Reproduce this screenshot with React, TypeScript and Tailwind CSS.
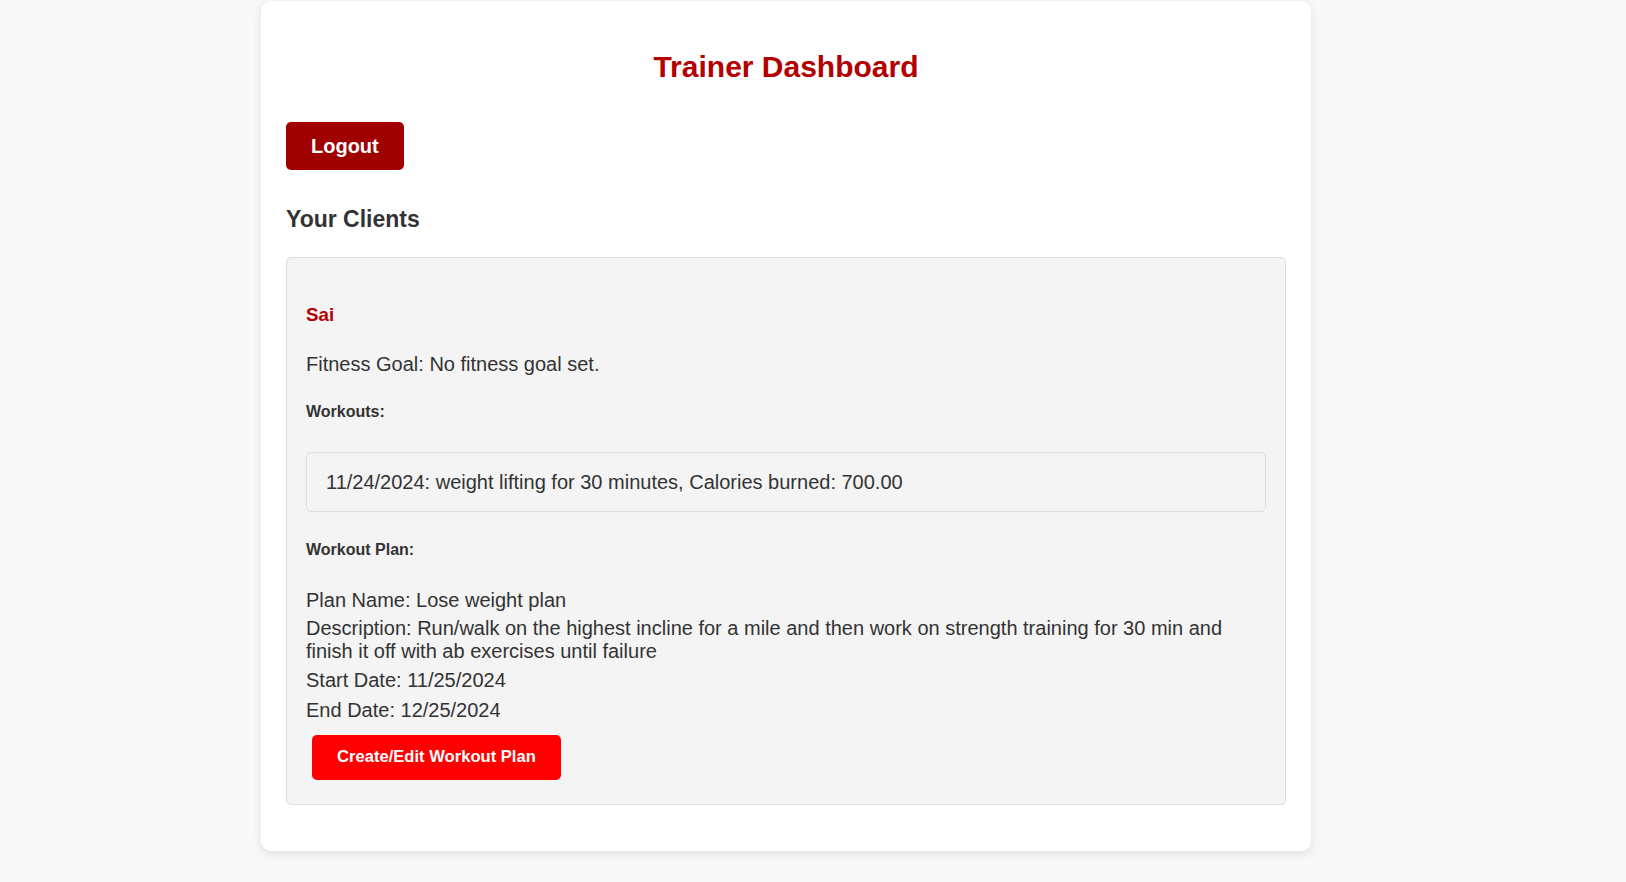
// Trainer dashboard: one white card holding the client list.

const font = { fontFamily: '"Liberation Sans", Arial, sans-serif' }

const client = {
  name: 'Sai',
  goal: 'No fitness goal set.',
  workouts: ['11/24/2024: weight lifting for 30 minutes, Calories burned: 700.00'],
  plan: {
    name: 'Lose weight plan',
    description:
      'Run/walk on the highest incline for a mile and then work on strength training for 30 min and finish it off with ab exercises until failure',
    start: '11/25/2024',
    end: '12/25/2024',
  },
}

export default function App() {
  return (
    <div style={font} className="min-h-screen bg-[#f8f8f8] pt-px text-[#333]">
      <div className="ml-[261px] w-[1050px] rounded-[10px] bg-white px-[25px] pt-[49px] pb-[46px] shadow-[0_3px_10px_rgba(0,0,0,0.1)]">
        <h1 className="text-center text-[30px] leading-[34px] font-bold text-[#b30000]">
          Trainer Dashboard
        </h1>

        <button className="mt-[38px] h-[48px] rounded-[5px] bg-[#a00000] px-[25px] text-[20px] font-bold text-white">
          Logout
        </button>

        <h2 className="mt-[36px] text-[23px] leading-[26px] font-bold text-[#333]">Your Clients</h2>

        <div className="mt-[25px] rounded-[5px] border border-[#ddd] bg-[#f4f4f4] px-[19px] pb-[24px] pt-[21px]">
          <h3 className="mt-[25px] text-[18.72px] leading-[22px] font-bold text-[#b30000]">{client.name}</h3>
          <p className="mt-[27px] text-[20px] leading-[23px]">Fitness Goal: {client.goal}</p>

          <h4 className="mt-[27px] text-[16px] leading-[18px] font-bold">Workouts:</h4>
          <ul className="mt-[31px]">
            {client.workouts.map((w) => (
              <li key={w} className="flex h-[60px] items-center rounded-[5px] border border-[#ddd] bg-[#f4f4f4] pl-[19px] text-[20px] leading-[23px]">
                {w}
              </li>
            ))}
          </ul>

          <h4 className="mt-[29px] text-[16px] leading-[18px] font-bold">Workout Plan:</h4>
          <p className="mt-[30px] text-[20px] leading-[23px]">Plan Name: {client.plan.name}</p>
          <p className="mt-[5px] text-[20px] leading-[23px]">Description: {client.plan.description}</p>
          <p className="mt-[6px] text-[20px] leading-[23px]">Start Date: {client.plan.start}</p>
          <p className="mt-[7px] text-[20px] leading-[23px]">End Date: {client.plan.end}</p>

          <button className="mt-[13px] ml-[6px] h-[45px] rounded-[5px] bg-[#ff0000] px-[25px] text-[16.6px] font-bold text-white">
            Create/Edit Workout Plan
          </button>
        </div>
      </div>
    </div>
  )
}
